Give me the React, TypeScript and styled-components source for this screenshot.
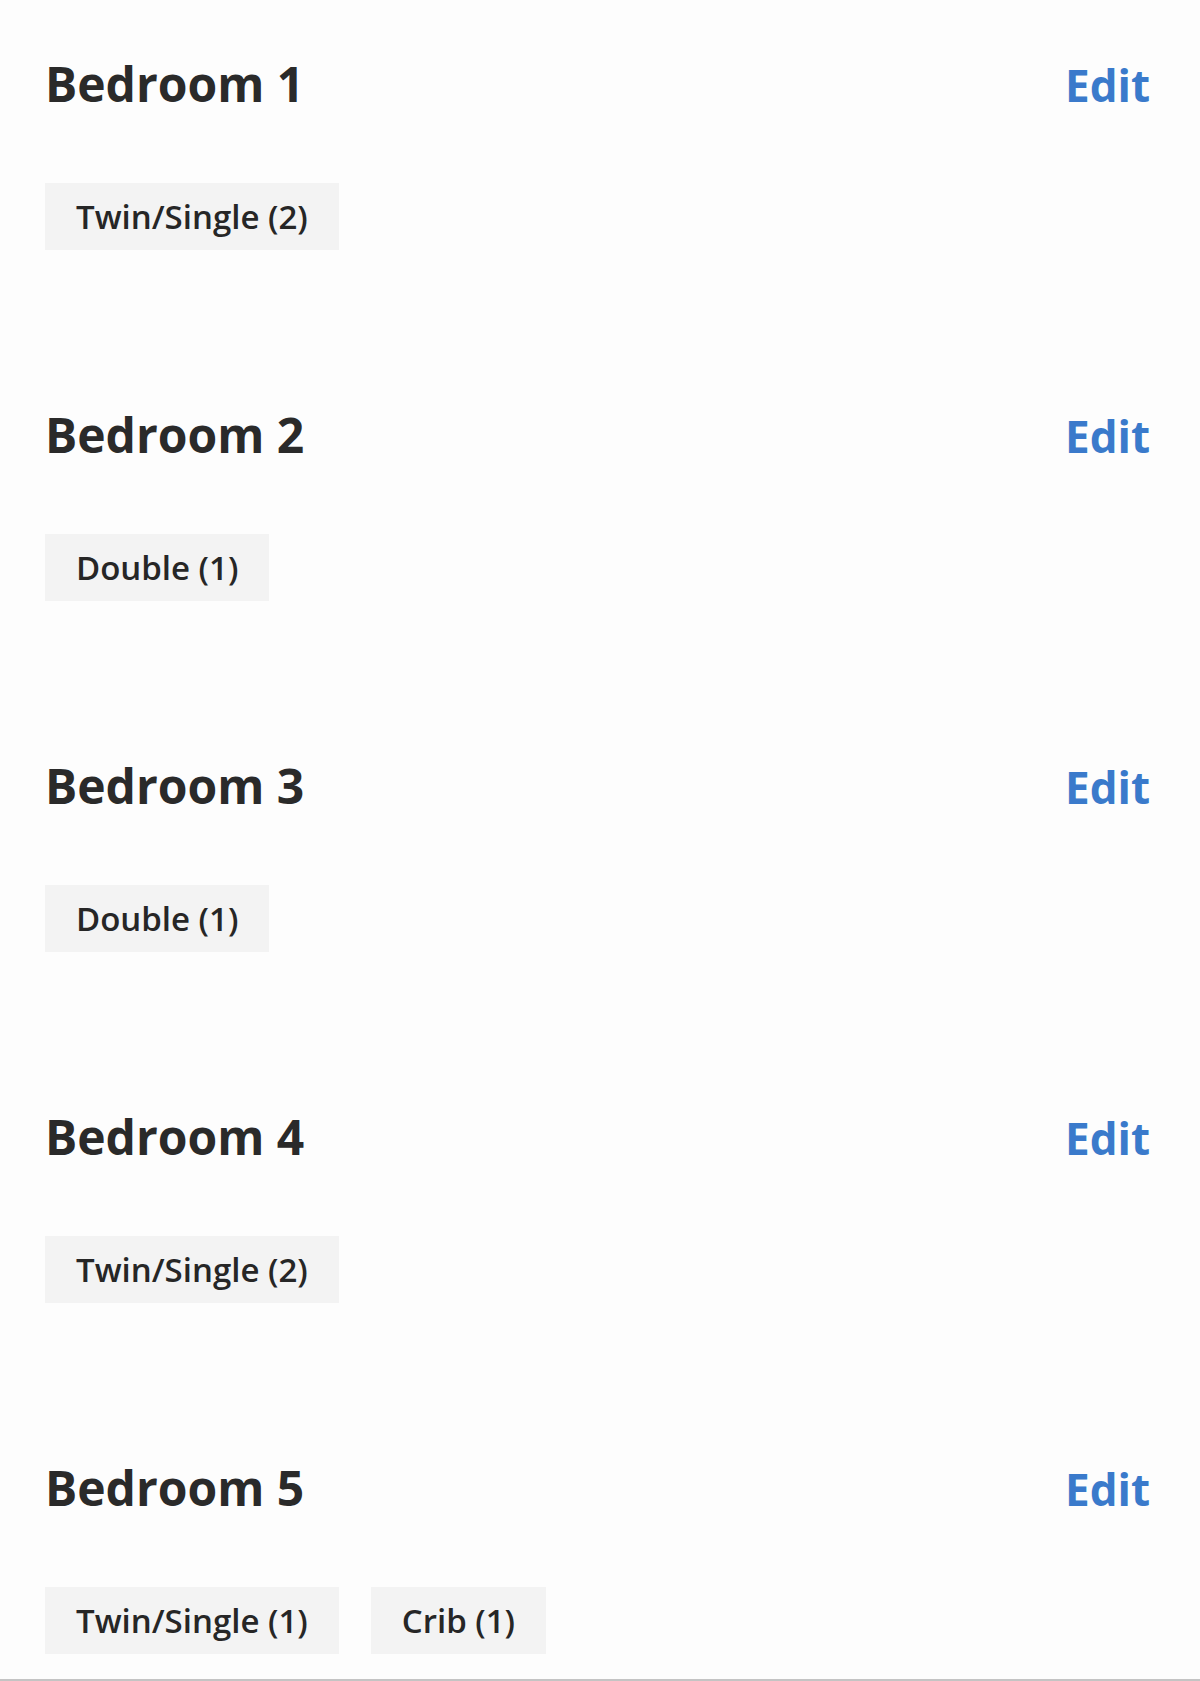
import React from 'react'
import styled, { createGlobalStyle } from 'styled-components'

const GlobalStyle = createGlobalStyle`
  body {
    margin: 0;
    background: #fdfdfd;
    font-family: "Open Sans", Lato, Arial, sans-serif;
  }
`

const Page = styled.main`
  display: flex;
  flex-direction: column;
  gap: 157px;
  padding: 56px 50px 25px 45px;
  border-bottom: 2px solid #c4c4c4;
`

const Section = styled.section`
  display: flex;
  flex-direction: column;
  gap: 71px;
`

const HeaderRow = styled.div`
  display: flex;
  align-items: baseline;
  justify-content: space-between;
  height: 56px;
`

const Title = styled.h2`
  margin: 0;
  font-size: 48px;
  line-height: 56px;
  font-weight: 700;
  color: #2a2a2a;
`

const EditLink = styled.a`
  font-size: 44px;
  line-height: 56px;
  font-weight: 700;
  color: #3a7acb;
  text-decoration: none;
  cursor: pointer;
`

const Chips = styled.div`
  display: flex;
  gap: 32px;
`

const Chip = styled.span`
  display: inline-block;
  height: 67px;
  line-height: 67px;
  padding: 0 31px;
  background: #f3f3f3;
  font-size: 33px;
  font-weight: 600;
  color: #262626;
`

type Room = { name: string; beds: string[] }

const rooms: Room[] = [
  { name: 'Bedroom 1', beds: ['Twin/Single (2)'] },
  { name: 'Bedroom 2', beds: ['Double (1)'] },
  { name: 'Bedroom 3', beds: ['Double (1)'] },
  { name: 'Bedroom 4', beds: ['Twin/Single (2)'] },
  { name: 'Bedroom 5', beds: ['Twin/Single (1)', 'Crib (1)'] },
]

export default function App() {
  return (
    <>
      <GlobalStyle />
      <Page>
        {rooms.map(room => (
          <Section key={room.name}>
            <HeaderRow>
              <Title>{room.name}</Title>
              <EditLink>Edit</EditLink>
            </HeaderRow>
            <Chips>
              {room.beds.map(bed => (
                <Chip key={bed}>{bed}</Chip>
              ))}
            </Chips>
          </Section>
        ))}
      </Page>
    </>
  )
}
